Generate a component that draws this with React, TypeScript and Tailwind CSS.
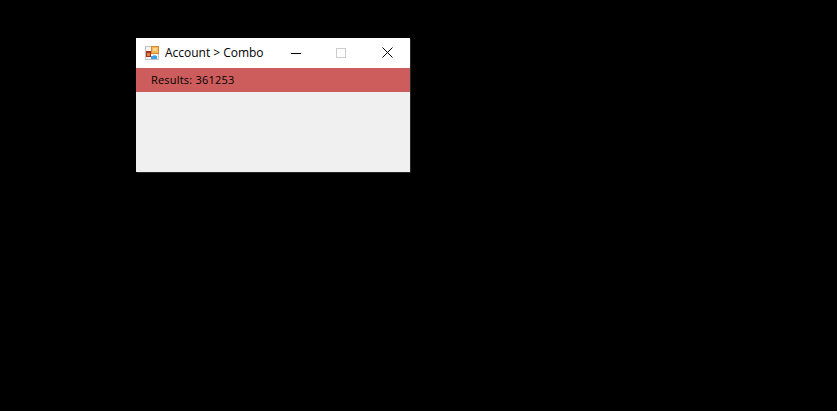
export default function App() {
  return (
    <div className="w-[837px] h-[411px] bg-black pt-[38px] pl-[136px] overflow-hidden" style={{ fontFamily: '"Open Sans", "Noto Sans", sans-serif' }}>
      <div className="w-[274px] h-[134px] flex flex-col bg-[#f0f0f0] shadow-[1px_1px_0_#262626]">
        <div className="h-[30px] bg-white flex items-center text-black">
          <svg width="14" height="14" viewBox="0 0 14 14" className="ml-[9px] mb-[1px] shrink-0" shapeRendering="crispEdges">
            <rect x="0" y="0" width="14" height="14" fill="#c4c4c4" />
            <rect x="1" y="1" width="12" height="12" fill="#f4f4f4" />
            <rect x="6" y="0" width="8" height="8" fill="#d98a2b" />
            <rect x="7" y="1" width="6" height="6" fill="#f2b65c" />
            <rect x="8" y="2" width="4" height="3" fill="#f8d48c" />
            <rect x="1" y="5" width="5" height="6" fill="#a8321f" />
            <rect x="2" y="7" width="3" height="3" fill="#d9874a" />
            <rect x="6" y="10" width="6" height="3" fill="#3f9fe8" />
            <rect x="8" y="9" width="3" height="1" fill="#7cc4f4" />
          </svg>
          <span className="ml-[6px] text-[12px] leading-none whitespace-nowrap tracking-[-0.02px]">Account &gt; Combo</span>
          <div className="ml-auto flex items-center">
            <div className="w-[45px] h-[30px] flex items-center justify-center">
              <svg width="10" height="11" viewBox="0 0 10 11" shapeRendering="crispEdges"><rect x="0" y="5" width="10" height="1" fill="#000" /></svg>
            </div>
            <div className="w-[46px] h-[30px] flex items-center justify-center">
              <svg width="10" height="10" viewBox="0 0 10 10" shapeRendering="crispEdges"><rect x="0.5" y="0.5" width="9" height="9" fill="none" stroke="#cccccc" /></svg>
            </div>
            <div className="w-[46px] h-[30px] flex items-center justify-center pl-[1px] pb-[1px]">
              <svg width="11" height="11" viewBox="0 0 11 11"><path d="M0.5 0.5L10.5 10.5M10.5 0.5L0.5 10.5" stroke="#000" strokeWidth="1" fill="none" /></svg>
            </div>
          </div>
        </div>
        <div className="h-[24px] bg-[#cd5c5c] flex items-center pl-[15px] text-[11px] tracking-[0.2px] text-black whitespace-nowrap">Results: 361253</div>
      </div>
    </div>
  );
}
